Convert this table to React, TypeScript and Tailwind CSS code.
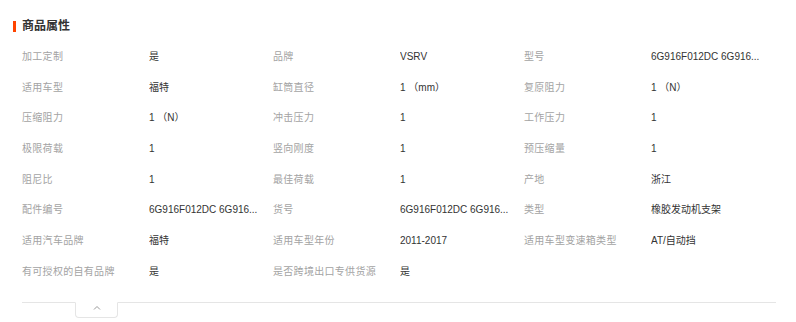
import React from 'react'

const rows: [string, string][] = [
  ['加工定制', '是'],
  ['品牌', 'VSRV'],
  ['型号', '6G916F012DC 6G916...'],
  ['适用车型', '福特'],
  ['缸筒直径', '1 （mm）'],
  ['复原阻力', '1 （N）'],
  ['压缩阻力', '1 （N）'],
  ['冲击压力', '1'],
  ['工作压力', '1'],
  ['极限荷载', '1'],
  ['竖向刚度', '1'],
  ['预压缩量', '1'],
  ['阻尼比', '1'],
  ['最佳荷载', '1'],
  ['产地', '浙江'],
  ['配件编号', '6G916F012DC 6G916...'],
  ['货号', '6G916F012DC 6G916...'],
  ['类型', '橡胶发动机支架'],
  ['适用汽车品牌', '福特'],
  ['适用车型年份', '2011-2017'],
  ['适用车型变速箱类型', 'AT/自动挡'],
  ['有可授权的自有品牌', '是'],
  ['是否跨境出口专供货源', '是'],
]

export default function App() {
  return (
    <div
      className="w-[796px] h-[322px] bg-white overflow-hidden"
      style={{ fontFamily: '"Liberation Sans", "Noto Sans CJK SC", sans-serif' }}
    >
      <div className="flex items-center h-[20px] mt-[16px] pl-[13px]">
        <span className="w-[3px] h-[11px] bg-[#ff4400]" />
        <h2 className="ml-[6px] text-[12px] font-bold text-[#333] leading-[20px]">商品属性</h2>
      </div>

      <div className="grid grid-cols-[251px_251px_251px] ml-[22px] mt-[5px]">
        {rows.map(([label, value]) => (
          <div key={label} className="flex items-center h-[30.7px] text-[10px]">
            <span className="w-[127px] text-[#a3a3a3] tracking-[0.3px] whitespace-nowrap">{label}</span>
            <span className="w-[120px] text-[#333] whitespace-nowrap overflow-hidden">{value}</span>
          </div>
        ))}
      </div>

      <div className="mt-[15px] ml-[22px] w-[754px] border-t border-[#e5e5e5]">
        <div className="ml-[53px] w-[43px] h-[16px] -mt-px border border-t-white border-[#e5e5e5] rounded-b-[4px] flex justify-center pt-[2px]">
          <svg width="8" height="5" viewBox="0 0 8 5" fill="none">
            <polyline points="1,4.5 4,1.5 7,4.5" stroke="#999" strokeWidth="1" />
          </svg>
        </div>
      </div>
    </div>
  )
}
